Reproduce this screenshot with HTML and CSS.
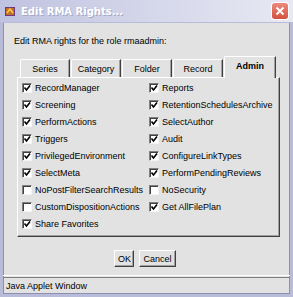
FILE: index.html
```html
<!DOCTYPE html>
<html lang="en">
<head>
    <title>Edit RMA Rights...</title>
    <link rel="stylesheet" href="styles.css">
</head>
<body>
    <div class="window">
        <div class="titlebar">
            <svg class="app-icon" width="10" height="9" viewBox="0 0 10 9">
                <rect x="0.5" y="0.5" width="9" height="8" fill="#c86a2a" stroke="#6b3a7a"/>
                <path d="M2 6 L5 2 L8 6" fill="none" stroke="#f6d04a" stroke-width="1.5"/>
            </svg>
            <span class="title">Edit RMA Rights...</span>
            <span class="close">
                <svg width="16" height="16" viewBox="0 0 16 16">
                    <path d="M4.5 4.5 L11.5 11.5 M11.5 4.5 L4.5 11.5" stroke="#fff" stroke-width="2"/>
                </svg>
            </span>
        </div>
        <div class="content">
            <p class="intro">Edit RMA rights for the role rmaadmin:</p>
            <div class="tabs">
                <div class="tab">Series</div>
                <div class="tab">Category</div>
                <div class="tab">Folder</div>
                <div class="tab">Record</div>
                <div class="tab active">Admin</div>
            </div>
            <div class="panel">
                <ul class="rights">
                    <li class="on">RecordManager</li>
                    <li class="on">Reports</li>
                    <li class="on">Screening</li>
                    <li class="on">RetentionSchedulesArchive</li>
                    <li class="on">PerformActions</li>
                    <li class="on">SelectAuthor</li>
                    <li class="on">Triggers</li>
                    <li class="on">Audit</li>
                    <li class="on">PrivilegedEnvironment</li>
                    <li class="on">ConfigureLinkTypes</li>
                    <li class="on">SelectMeta</li>
                    <li class="on">PerformPendingReviews</li>
                    <li>NoPostFilterSearchResults</li>
                    <li>NoSecurity</li>
                    <li>CustomDispositionActions</li>
                    <li class="on">Get AllFilePlan</li>
                    <li class="on">Share Favorites</li>
                </ul>
            </div>
            <div class="actions">
                <button class="ok">OK</button>
                <button>Cancel</button>
            </div>
        </div>
        <div class="status">Java Applet Window</div>
    </div>
</body>
</html>
```

FILE: styles.css
```css
body {
    margin: 0;
    font-family: "Liberation Sans", Arial, sans-serif;
    font-size: 9px;
    color: #000;
}
.window {
    width: 293px;
    height: 297px;
    box-sizing: border-box;
    background-color: #e2e2e2;
    border: 3px solid #b9bcd8;
    border-top: none;
    box-shadow: inset 1px 0 #8c8fb0, inset -1px 0 #8c8fb0, inset 0 -1px #8c8fb0;
    display: flex;
    flex-direction: column;
}
.titlebar {
    height: 22px;
    margin: 0 -3px;
    display: flex;
    align-items: center;
    padding: 0 4px 0 5px;
    background: linear-gradient(to right, #bfc3e0, #d8daec 60%, #e8e9f3);
    border-bottom: 1px solid #b9bcd8;
}
.app-icon {
    margin-right: 6px;
}
.title {
    flex: 1;
    color: #fff;
    font-family: "DejaVu Sans", sans-serif;
    font-weight: bold;
    font-size: 10px;
    text-shadow: 1px 1px #a4a7c4;
}
.close {
    width: 16px;
    height: 16px;
    margin-right: 1px;
    border-radius: 3px;
    background: linear-gradient(#ec8a7c, #d4503e);
    box-shadow: 0 0 0 1px #fff;
}
.close svg {
    display: block;
}
.content {
    flex: 1;
    padding: 0 10px 0 11px;
    border-bottom: 1px solid #fff;
}
.intro {
    margin: 13px 0 0;
    height: 11px;
    line-height: 11px;
}
.tabs {
    display: flex;
    align-items: flex-end;
    height: 22px;
    margin-top: 8px;
    padding-left: 6px;
}
.tab {
    width: 50px;
    height: 18px;
    box-sizing: border-box;
    line-height: 18px;
    text-align: center;
    border-top: 1px solid #fff;
    border-left: 1px solid #fff;
    border-right: 1px solid #404040;
    border-top-left-radius: 2px;
    box-shadow: inset -1px 0 #a0a0a0;
    margin-right: 1px;
}
.tab.active {
    height: 22px;
    width: 52px;
    margin-bottom: -1px;
    background-color: #e2e2e2;
    font-weight: bold;
    line-height: 19px;
    position: relative;
}
.panel {
    width: 263px;
    height: 160px;
    box-sizing: border-box;
    margin-left: 3px;
    border-top: 1px solid #fff;
    border-left: 1px solid #fff;
    border-right: 1px solid #404040;
    border-bottom: 1px solid #404040;
    box-shadow: inset -1px -1px #a0a0a0;
    padding: 1px 0 0 4px;
}
.rights {
    list-style: none;
    margin: 0;
    padding: 0;
    display: grid;
    grid-template-columns: 127px 1fr;
}
.rights li {
    height: 17.1px;
    display: flex;
    align-items: center;
    white-space: nowrap;
}
.rights li::before {
    content: "";
    width: 8px;
    height: 8px;
    margin-right: 3px;
    background-color: #fff;
    border-top: 1px solid #808080;
    border-left: 1px solid #808080;
    border-right: 1px solid #f4f4f4;
    border-bottom: 1px solid #f4f4f4;
    box-shadow: inset 1px 1px #404040;
    flex: none;
}
.rights li.on::before {
    background: #fff url("data:image/svg+xml;utf8,<svg xmlns='http://www.w3.org/2000/svg' width='8' height='8'><path d='M1.5 3.5 L3.5 6 L7 1.5' fill='none' stroke='black' stroke-width='1.6'/></svg>") no-repeat center;
}
.actions {
    display: flex;
    justify-content: center;
    gap: 5px;
    margin-top: 13px;
    padding-right: 4px;
}
button {
    font-family: "Liberation Sans", Arial, sans-serif;
    font-size: 9px;
    height: 17px;
    padding: 0 3px;
    background-color: #e2e2e2;
    border: 1px solid;
    border-color: #fff #404040 #404040 #fff;
    box-shadow: inset -1px -1px #a0a0a0;
}
button.ok {
    width: 20px;
    padding: 0;
}
.status {
    height: 16px;
    line-height: 16px;
    padding-left: 3px;
    border-top: 1px solid #808080;
    margin-top: 1px;
}
```
